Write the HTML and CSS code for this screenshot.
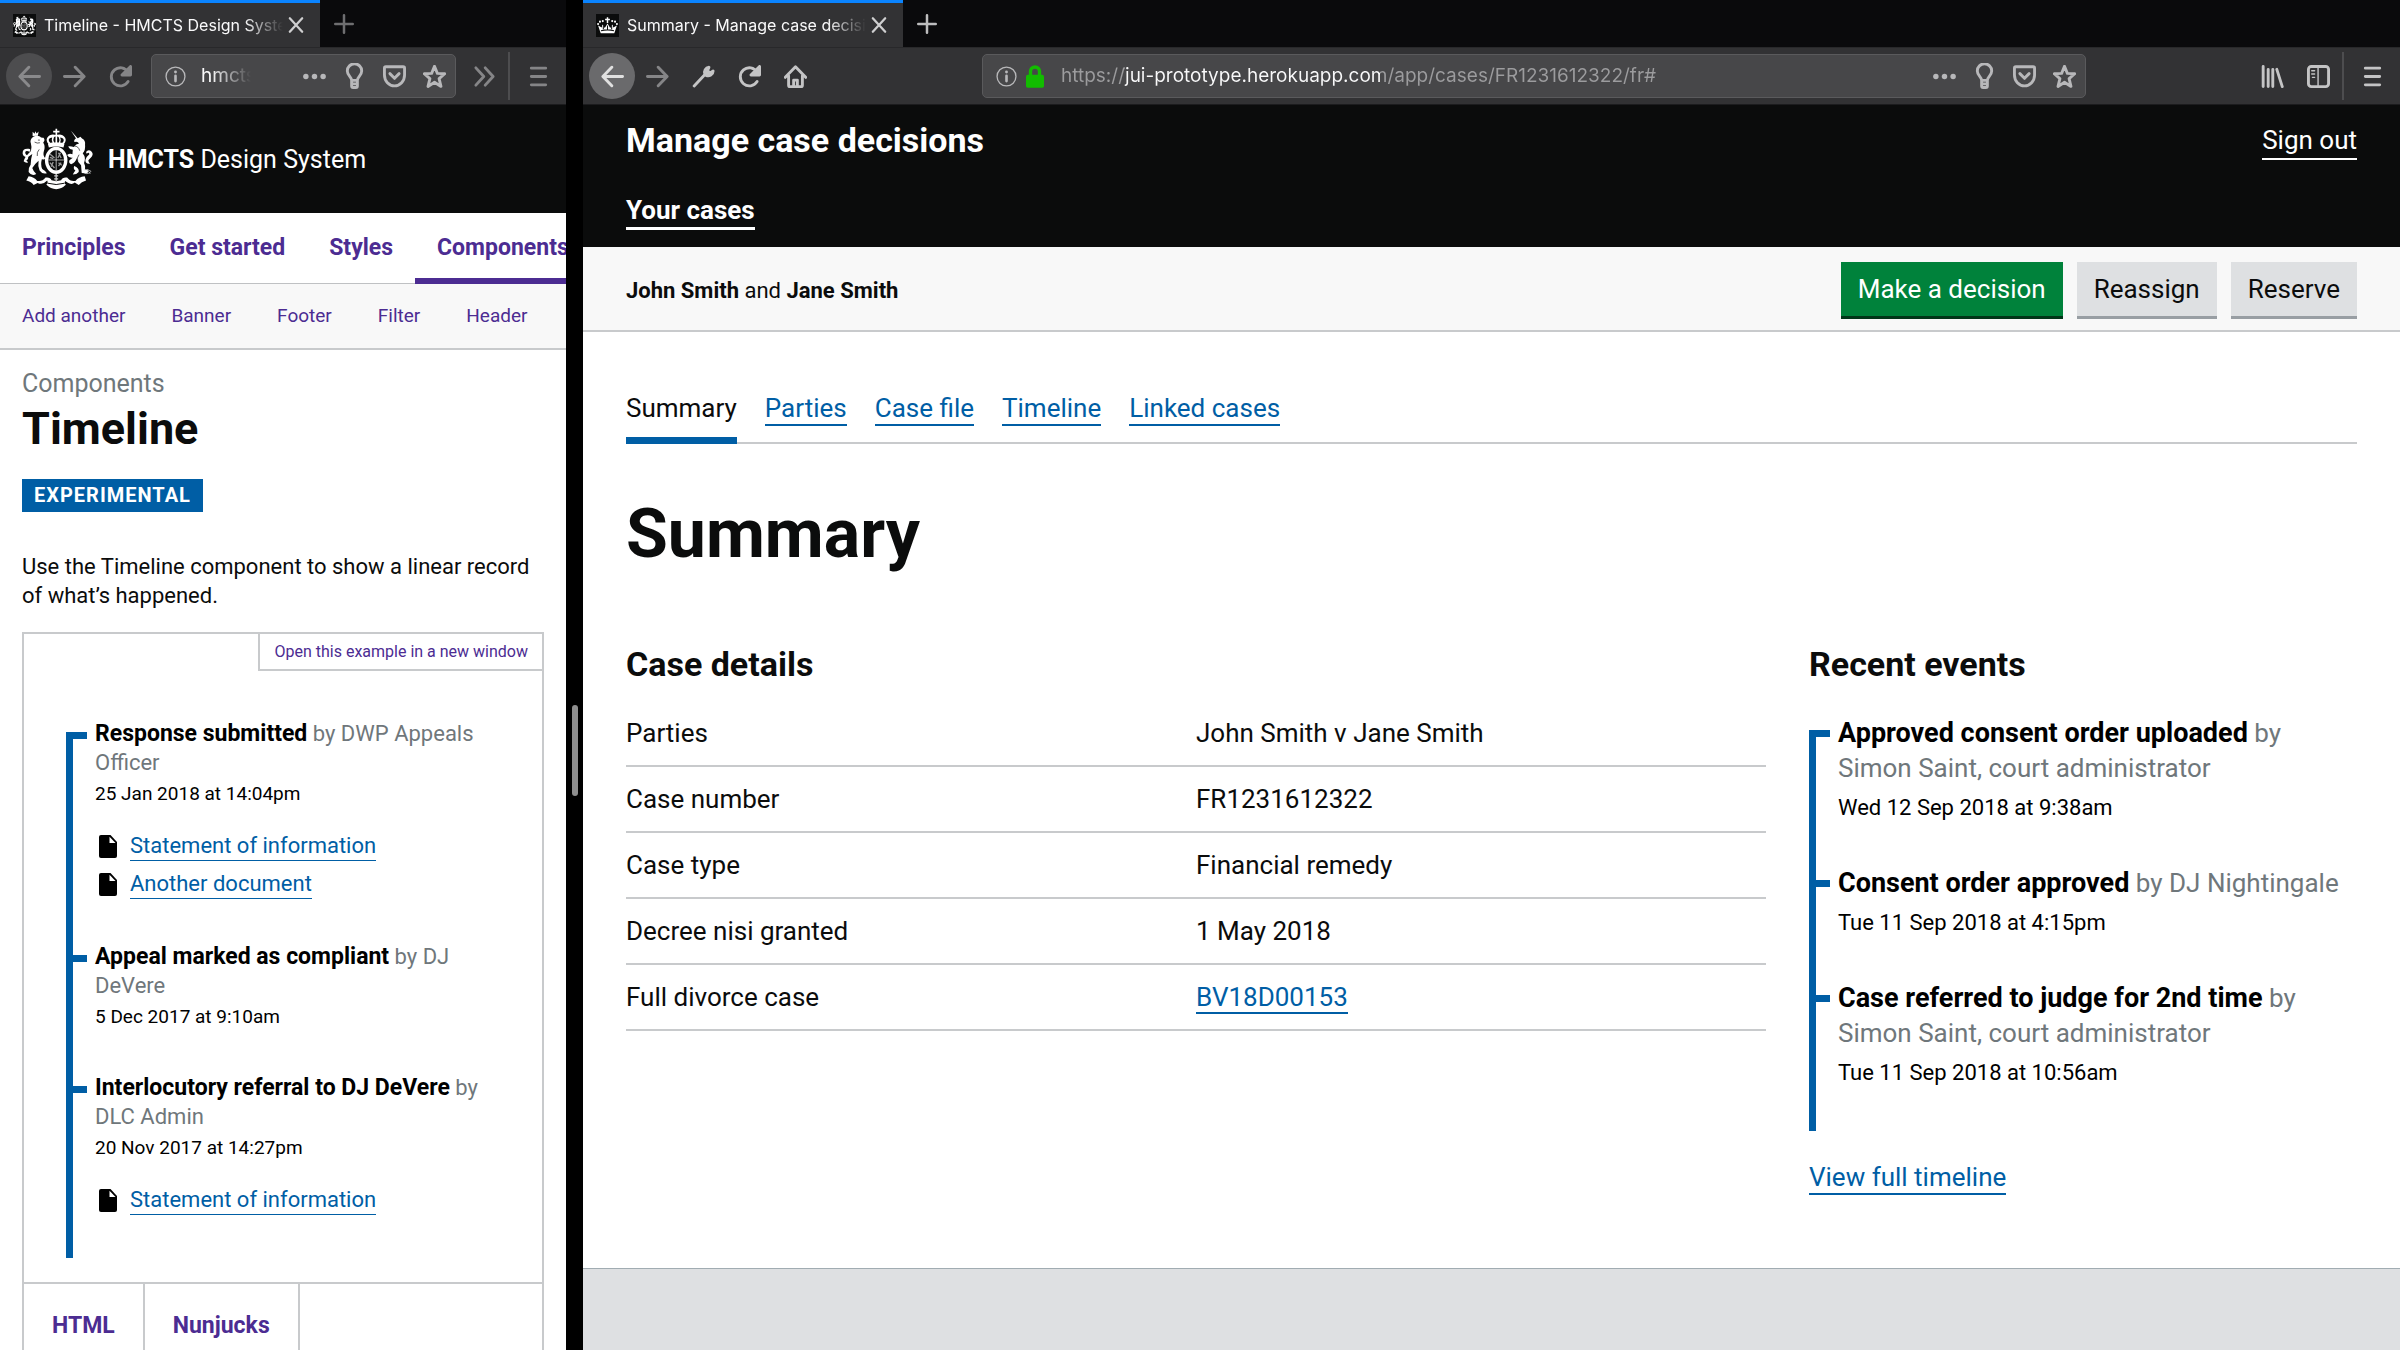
FILE: index.html
```html
<!DOCTYPE html>
<html lang="en">
<head>
<meta charset="utf-8">
<title>HMCTS Design System and Manage case decisions</title>
<link rel="stylesheet" href="styles.css">
</head>
<body>
<svg class="sprite" aria-hidden="true">
  <symbol id="i-back" viewBox="0 0 16 16"><path d="M15 8H1.500M7.500 1.500L1.300 8l6.200 6.500"/></symbol>
  <symbol id="i-forward" viewBox="0 0 16 16"><path d="M1 8h13.500M8.500 1.500L14.700 8l-6.200 6.500"/></symbol>
  <symbol id="i-reload" viewBox="0 0 16 16"><path d="M13.300 5A6.300 6.300 0 1 0 13.300 11.500"/><path d="M15 1v6H9z" class="solid"/></symbol>
  <symbol id="i-info" viewBox="0 0 16 16"><circle cx="8" cy="8" r="7.200" class="thin"/><path d="M8 7.500v4"/><circle cx="8" cy="4.600" r="1.100" class="solid dot"/></symbol>
  <symbol id="i-dots" viewBox="0 0 16 16"><g class="solid dot"><circle cx="2" cy="8" r="1.900"/><circle cx="8" cy="8" r="1.900"/><circle cx="14" cy="8" r="1.900"/></g></symbol>
  <symbol id="i-bulb" viewBox="0 0 16 18"><path d="M6 12c0-2.500-3-3.200-3-6.500a5 5 0 0 1 10 0C13 8.800 10 9.500 10 12zM6 12v4q0 1 1 1h2q1 0 1-1v-4M6 14.500h4"/></symbol>
  <symbol id="i-pocket" viewBox="0 0 16 16"><path d="M2 1.200h12q1 0 1 1V7a7 7.500 0 0 1-14 0V2.200q0-1 1-1zM4.800 6L8 9.300 11.200 6"/></symbol>
  <symbol id="i-star" viewBox="0 0 16 16"><path d="M8 .9l2 4.900 5.100.3-3.900 3.400 1.300 5.400L8 12l-4.500 2.900 1.300-5.400L.9 6.100 6 5.800z"/></symbol>
  <symbol id="i-chevrons" viewBox="0 0 16 16"><path d="M2 2l5.500 6L2 14M8.500 2L14 8l-5.500 6"/></symbol>
  <symbol id="i-menu" viewBox="0 0 16 16"><path d="M3 2.200h10M3 8h10M3 13.800h10"/></symbol>
  <symbol id="i-close" viewBox="0 0 16 16"><path d="M2.500 2l11 12M13.500 2l-11 12"/></symbol>
  <symbol id="i-plus" viewBox="0 0 16 16"><path d="M8 1v14M1 8h14"/></symbol>
  <symbol id="i-wrench" viewBox="0 0 16 16"><path d="M1.500 14.600L9 6.600"/><path d="M11.800 1.600A3.400 3.400 0 0 0 9 6.400L9.800 7.200A3.400 3.400 0 0 0 14.700 4.200L12.600 5.600 10.800 3.800z" class="solid"/></symbol>
  <symbol id="i-home" viewBox="0 0 16 16"><path d="M.9 8.600L8 1.200l7.100 7.400M3.200 7.500V14q0 1 1 1h7.600q1 0 1-1V7.500M6.700 15v-4.500h2.600V15"/></symbol>
  <symbol id="i-lock" viewBox="0 0 16 20"><path d="M4 9V5.500a4 4 0 0 1 8 0V9" fill="none" stroke="#12bc00" stroke-width="3"/><rect x="0" y="8.500" width="16" height="11.500" rx="1.500" fill="#12bc00"/></symbol>
  <symbol id="i-library" viewBox="0 0 16 16"><path d="M1.500 1v14M5 3v12M8.200 3v12M11 3l3.800 12"/></symbol>
  <symbol id="i-sidebar" viewBox="0 0 16 16"><rect x="1" y="1" width="14" height="14" rx="2"/><path d="M7.700 1v14" class="thin"/><path d="M3.300 4h2M3.300 6.300h2M3.800 8.600h1.500" class="thin"/></symbol>
  <symbol id="i-doc" viewBox="0 0 18 23"><path d="M2 0h9.500L18 7v14q0 2-2 2H2q-2 0-2-2V2Q0 0 2 0z" fill="#000"/><path d="M10.500 1.800V8h6z" fill="#fff"/></symbol>
  <symbol id="i-crest" viewBox="0 0 214 182">
    <g fill="#fff">
      <path d="M101 0h5v6h7v5h-7v8h-5v-8h-7V6h7z"/>
      <path d="M76 27q10-14 27-8 17-6 27 8 5 9-4 19H80q-9-10-4-19zm5 4q-2 6 4 11h7q-4-9-1-16-7 0-10 5zm15-5q-4 8 1 16h4V23q-3 0-5 3zm10-3v19h5q4-9 0-16-2-3-5-3zm9 3q4 8 0 16h7q6-5 3-11-3-5-10-5z"/>
      <path d="M78 45q25-7 50 0l-3 11q-22-5-44 0z"/>
      <path fill-rule="evenodd" d="M103 54a34 41 0 1 1 0 82 34 41 0 1 1 0-82zm0 10a24 31 0 1 0 0 62 24 31 0 1 0 0-62z"/>
      <path d="M32 9l6 6 2-8 4 7 6-6-2 13-16 1z"/>
      <path d="M34 24q10-6 20-1 3 5 11 4 6 8-1 14 7 12 2 26-4 13 4 22-3 6-10 2-5 18 1 30 10 5 14 13-14 4-22-8-6-14-3-30-12 10-19 22 3 10 12 18-14 8-23-6-2-12 6-22 1-19 5-32-14 8-20 19 5 0 7 7-8 2-13-4 2-12 22-31 3-14 0-22-5-12 7-21z"/>
      <path d="M20 60Q0 58 2 76q2 8 9 9 4 6-5 12 16-2 12-16-10-4-8-11 2-6 13-1 6-8-3-9z"/>
      <path d="M147 5l24 27-4 3z"/>
      <path d="M166 30l10-6 5 5q11 5 9 19 2 16-7 26 11 14 4 29 5 9 3 20l10 3-3 9-17-2-2-23q-10-9-13-21-4 14-17 18-8-3-5-12l10-8q-12 2-17-8 8-6 16-2l1-14q-11-2-14-10 9-1 17 2 7-10 16-11-5-8-14-4-3-6 6-12z"/>
      <path d="M193 70q7-10 17-1 6 7 0 15l-10 11q0 6 5 10-14 2-14-11 2-9 12-17 0-8-8-2z"/>
      <path d="M157 112q16 6 14 18-6 8-18 8 5-9 8-12-7-5-4-14z"/>
      <path d="M20 143q16 2 26 14 15 3 25-10 14-2 18 8 15 4 29 0 4-10 18-8 10 13 25 10 10-12 28-14l4 13q-14 4-22 13l-12-7q-9 9-22 0l-7-5q-4 10 3 11-14 14-30 14t-30-14q7-2 3-12-14 15-29 7l-12 6q-6-9-22-13z"/>
    </g>
    <path d="M103 64v62M79 94h48" stroke="#fff" stroke-width="2"/>
    <path d="M84 76l14 12M84 86l10 4M110 72l8 16M116 72l-8 16M84 102l14 16M94 100l-6 14M110 102l10 8M110 112l8-10" stroke="#999" stroke-width="4"/>
    <path d="M103 136v24M97 142h12M97 151h12" stroke="#ccc" stroke-width="4"/>
    <path d="M78 164q25 8 50 0" stroke="#0b0c0c" stroke-width="3" fill="none"/>
    <g stroke="#0b0c0c" stroke-width="2" fill="none"><path d="M38 40q8 5 16 2M52 62q-8 8-6 20M158 52q12 0 16 14M172 78q-8 10-4 20M48 34h6"/></g>
    <g stroke="#ddd" stroke-width="2" fill="none"><path d="M186 124q14-4 22 4-6 10-20 6M196 122l10 14"/></g>
  </symbol>
  <symbol id="i-crown" viewBox="0 0 22 22"><g fill="#fff"><path d="M10.300 3h1.400v1.500h1.600v1.400h-1.600v2.600h-1.400V5.900H8.700V4.500h1.600z"/><circle cx="2" cy="9.500" r="1"/><circle cx="3.800" cy="7.300" r="1"/><circle cx="6.500" cy="6.800" r="1"/><circle cx="20" cy="9.500" r="1"/><circle cx="18.200" cy="7.300" r="1"/><circle cx="15.500" cy="6.800" r="1"/><path d="M4.500 18.500L2 11l3.500 2 .6-3 2.300 3.500L11 9l2.600 4.500L15.900 10l.6 3L20 11l-2.500 7.500z"/></g><path d="M4.800 16q6.200-1.600 12.400 0M7 11.500v3M15 11.500v3M11 11v4" fill="none" stroke="#111" stroke-width="1"/></symbol>
</svg>

<div class="split">
  <section class="window" aria-label="HMCTS Design System">
    <div class="tabstrip">
      <div class="tab">
        <svg class="favicon"><use href="#i-crest"/></svg>
        <span class="tab-title">Timeline - HMCTS Design System</span>
        <button class="tab-button" aria-label="Close tab"><svg class="icon close"><use href="#i-close"/></svg></button>
      </div>
      <button class="new-tab dim" aria-label="New tab"><svg class="icon plus"><use href="#i-plus"/></svg></button>
    </div>
    <div class="toolbar dim">
      <button class="round" aria-label="Back"><svg class="icon"><use href="#i-back"/></svg></button>
      <button aria-label="Forward"><svg class="icon"><use href="#i-forward"/></svg></button>
      <button aria-label="Reload"><svg class="icon"><use href="#i-reload"/></svg></button>
      <div class="urlbar">
        <svg class="icon small"><use href="#i-info"/></svg>
        <input class="url url-short" aria-label="Address" value="hmcts-design-system.herokuapp.com">
        <svg class="icon"><use href="#i-dots"/></svg>
        <svg class="icon tall"><use href="#i-bulb"/></svg>
        <svg class="icon"><use href="#i-pocket"/></svg>
        <svg class="icon"><use href="#i-star"/></svg>
      </div>
      <button class="overflow" aria-label="More tools"><svg class="icon"><use href="#i-chevrons"/></svg></button>
      <button class="menu" aria-label="Menu"><svg class="icon"><use href="#i-menu"/></svg></button>
    </div>

    <div class="page">
      <header class="ds-header">
        <svg class="crest"><use href="#i-crest"/></svg>
        <a href="#" class="ds-name"><b>HMCTS</b> Design System</a>
      </header>
      <nav class="ds-nav" aria-label="Sections">
        <a href="#">Principles</a><a href="#">Get started</a><a href="#">Styles</a><a href="#" class="current">Components</a>
      </nav>
      <nav class="ds-subnav" aria-label="Components">
        <a href="#">Add another</a><a href="#">Banner</a><a href="#">Footer</a><a href="#">Filter</a><a href="#">Header</a>
      </nav>
      <main class="ds-main">
        <p class="caption">Components</p>
        <h1 class="ds-title">Timeline</h1>
        <strong class="tag">EXPERIMENTAL</strong>
        <p class="intro">Use the Timeline component to show a linear record of what’s happened.</p>
        <div class="example">
          <div class="example-open"><a href="#">Open this example in a new window</a></div>
          <ol class="timeline">
            <li>
              <p class="event"><b>Response submitted</b> by DWP Appeals Officer</p>
              <p class="date">25 Jan 2018 at 14:04pm</p>
              <ul class="documents">
                <li><svg class="doc"><use href="#i-doc"/></svg><a class="link" href="#">Statement of information</a></li>
                <li><svg class="doc"><use href="#i-doc"/></svg><a class="link" href="#">Another document</a></li>
              </ul>
            </li>
            <li>
              <p class="event"><b>Appeal marked as compliant</b> by DJ DeVere</p>
              <p class="date">5 Dec 2017 at 9:10am</p>
            </li>
            <li>
              <p class="event"><b>Interlocutory referral to DJ DeVere</b> by DLC Admin</p>
              <p class="date">20 Nov 2017 at 14:27pm</p>
              <ul class="documents">
                <li><svg class="doc"><use href="#i-doc"/></svg><a class="link" href="#">Statement of information</a></li>
              </ul>
            </li>
          </ol>
          <div class="code-tabs"><a href="#">HTML</a><a href="#">Nunjucks</a></div>
        </div>
      </main>
    </div>
  </section>

  <div class="divider"><span class="handle"></span></div>

  <section class="window" aria-label="Manage case decisions">
    <div class="tabstrip">
      <div class="tab">
        <svg class="favicon"><use href="#i-crown"/></svg>
        <span class="tab-title">Summary - Manage case decisions</span>
        <button class="tab-button" aria-label="Close tab"><svg class="icon close"><use href="#i-close"/></svg></button>
      </div>
      <button class="new-tab" aria-label="New tab"><svg class="icon plus"><use href="#i-plus"/></svg></button>
    </div>
    <div class="toolbar">
      <button class="round" aria-label="Back"><svg class="icon"><use href="#i-back"/></svg></button>
      <button class="dim" aria-label="Forward"><svg class="icon"><use href="#i-forward"/></svg></button>
      <button aria-label="Developer tools"><svg class="icon"><use href="#i-wrench"/></svg></button>
      <button aria-label="Reload"><svg class="icon"><use href="#i-reload"/></svg></button>
      <button aria-label="Home"><svg class="icon"><use href="#i-home"/></svg></button>
      <div class="urlbar wide">
        <svg class="icon small"><use href="#i-info"/></svg>
        <svg class="lock"><use href="#i-lock"/></svg>
        <input class="url url-long" aria-label="Address" value="https://jui-prototype.herokuapp.com/app/cases/FR1231612322/fr#">
        <svg class="icon"><use href="#i-dots"/></svg>
        <svg class="icon tall"><use href="#i-bulb"/></svg>
        <svg class="icon"><use href="#i-pocket"/></svg>
        <svg class="icon"><use href="#i-star"/></svg>
      </div>
      <button aria-label="Library"><svg class="icon"><use href="#i-library"/></svg></button>
      <button aria-label="Sidebars"><svg class="icon"><use href="#i-sidebar"/></svg></button>
      <button class="menu" aria-label="Menu"><svg class="icon"><use href="#i-menu"/></svg></button>
    </div>

    <div class="page footer-fill">
      <header class="app-header">
        <div class="app-top">
          <a href="#" class="app-name">Manage case decisions</a>
          <a href="#" class="sign-out">Sign out</a>
        </div>
        <nav class="app-nav" aria-label="Main"><a href="#">Your cases</a></nav>
      </header>
      <div class="case-bar">
        <p><b>John Smith</b> and <b>Jane Smith</b></p>
        <div class="actions">
          <button class="btn primary">Make a decision</button>
          <button class="btn">Reassign</button>
          <button class="btn">Reserve</button>
        </div>
      </div>
      <main class="app-main">
        <nav class="case-tabs" aria-label="Case">
          <a href="#" class="current">Summary</a>
          <a href="#" class="link">Parties</a>
          <a href="#" class="link">Case file</a>
          <a href="#" class="link">Timeline</a>
          <a href="#" class="link">Linked cases</a>
        </nav>
        <h1 class="app-title">Summary</h1>
        <div class="columns">
          <section>
            <h2>Case details</h2>
            <table class="details">
              <tr><th scope="row">Parties</th><td>John Smith v Jane Smith</td></tr>
              <tr><th scope="row">Case number</th><td>FR1231612322</td></tr>
              <tr><th scope="row">Case type</th><td>Financial remedy</td></tr>
              <tr><th scope="row">Decree nisi granted</th><td>1 May 2018</td></tr>
              <tr><th scope="row">Full divorce case</th><td><a class="link" href="#">BV18D00153</a></td></tr>
            </table>
          </section>
          <section>
            <h2>Recent events</h2>
            <ol class="timeline large">
              <li>
                <p class="event"><b>Approved consent order uploaded</b> by Simon Saint, court administrator</p>
                <p class="date">Wed 12 Sep 2018 at 9:38am</p>
              </li>
              <li>
                <p class="event"><b>Consent order approved</b> by DJ Nightingale</p>
                <p class="date">Tue 11 Sep 2018 at 4:15pm</p>
              </li>
              <li>
                <p class="event"><b>Case referred to judge for 2nd time</b> by Simon Saint, court administrator</p>
                <p class="date">Tue 11 Sep 2018 at 10:56am</p>
              </li>
            </ol>
            <a class="link view-all" href="#">View full timeline</a>
          </section>
        </div>
      </main>
    </div>
  </section>
</div>
</body>
</html>
```
FILE: styles.css
```css
* { box-sizing: border-box; }
body { margin: 0; background: #000; color: #0b0c0c; font-family: Roboto, "Liberation Sans", sans-serif; font-size: 22px; line-height: 29px; }
p, h1, h2, ol, ul { margin: 0; padding: 0; }
ol, ul { list-style: none; }
a { color: inherit; text-decoration: none; }
button { border: 0; padding: 0; background: none; font: inherit; color: inherit; }
.sprite { display: none; }

.split { display: grid; grid-template-columns: minmax(0, 566fr) 17px minmax(0, 1817fr); height: 100vh; }
.window { display: flex; flex-direction: column; overflow: hidden; min-width: 0; }
.divider { display: flex; align-items: center; justify-content: center; padding-top: 150px; }
.handle { width: 6px; height: 91px; border-radius: 3px; background: #8e8e8e; }

/* Browser chrome */
.icon { display: block; width: 23px; height: 23px; fill: none; stroke: currentColor; stroke-width: 2; stroke-linecap: round; stroke-linejoin: round; flex: none; }
.icon.small { width: 21px; height: 21px; }
.icon.tall { height: 26px; }
.icon.close { width: 18px; height: 18px; stroke-width: 2; }
.icon.plus { width: 20px; height: 20px; stroke-width: 2; }
.solid { fill: currentColor; }
.dot { stroke: none; }
.thin { stroke-width: 1; }
.tabstrip { display: flex; align-items: stretch; height: 47px; flex: none; background: #0a0a0c; font: 16px/24px Inter, sans-serif; color: #f9f9fa; }
.tab { display: flex; align-items: center; width: 320px; border-top: 3px solid #0a84ff; background: #323234; padding: 0 15px 0 13px; }
.favicon { width: 23px; height: 23px; flex: none; background: #0b0c0c; margin-right: 8px; }
.tab-title { flex: 1; min-width: 0; overflow: hidden; white-space: nowrap; -webkit-mask-image: linear-gradient(to right, #000 84%, transparent); mask-image: linear-gradient(to right, #000 84%, transparent); }
.tab-button { margin-left: 4px; color: #cfcfd0; }
.new-tab { padding: 0 14px; color: #bdbdbe; }
.new-tab.dim { color: #6e6e70; }
.toolbar { display: flex; align-items: center; gap: 23px; height: 58px; flex: none; padding: 0 16px 0 6px; background: #323234; border-top: 1px solid #28282a; border-bottom: 1px solid #1c1c1e; color: #c4c4c5; font: 19px/24px Inter, sans-serif; }
.toolbar.dim, .toolbar .dim { color: #858587; }
.round { display: grid; place-items: center; width: 46px; height: 46px; border-radius: 50%; background: #6a6a6c; flex: none; color: #e0e0e0; margin-right: -12px; }
.dim .round { background: #4d4d4f; color: #8a8a8c; }
.urlbar { display: flex; align-items: center; flex: 1; min-width: 0; gap: 17px; height: 44px; padding: 0 9px 0 13px; border: 1px solid #5a5a5c; border-radius: 5px; background: #474749; color: #b8b8ba; margin-left: -4px; }
.urlbar.wide { margin: 0 152px; }
.url { flex: 1; min-width: 0; padding: 0; border: 0; outline: 0; background: none; font: inherit; color: #f9f9fa; }
.url-short { margin: 0 35px 0 -2px; -webkit-mask-image: linear-gradient(to right, #000 20%, transparent); mask-image: linear-gradient(to right, #000 20%, transparent); }
.lock { width: 18px; height: 23px; flex: none; margin-left: -8px; }
.url-long { color: transparent; background: linear-gradient(to right, #9c9c9e 63px, #f9f9fa 63px 319px, #9c9c9e 319px); -webkit-background-clip: text; background-clip: text; }
.overflow { margin-left: -6px; }
.menu { align-self: stretch; margin: 4px 0 4px -11px; padding-left: 17px; border-left: 2px solid #4d4d4f; }

.page { flex: 1; min-height: 0; overflow: hidden; background: #fff; }
.footer-fill { background: #dee0e2; }

/* Design system site */
.ds-header { display: flex; align-items: center; gap: 15px; height: 108px; padding: 0 22px; background: #0b0c0c; color: #fff; font-size: 25px; }
.crest { width: 71px; height: 62px; }
.ds-nav { display: flex; padding-left: 22px; border-bottom: 1px solid #bfc1c3; color: #4c2c92; font-size: 23px; font-weight: 700; line-height: 69px; white-space: nowrap; }
.ds-nav a { margin-right: 44px; }
.ds-nav .current { margin: 0 0 -1px -22px; padding: 0 22px; height: 71px; border-bottom: 6px solid #4c2c92; }
.ds-subnav { display: flex; gap: 46px; padding: 0 22px; background: #f8f8f8; border-bottom: 2px solid #c8cacc; color: #4c2c92; font-size: 19px; line-height: 64px; white-space: nowrap; }
.ds-main { padding: 18px 22px 0; }
.caption { color: #6f777b; font-size: 25px; line-height: 32px; }
.ds-title { margin-top: 5px; font-size: 45px; line-height: 48px; }
.tag { display: inline-block; margin-top: 26px; padding: 0 12px; background: #005ea5; color: #fff; font-size: 20px; line-height: 33px; letter-spacing: 1px; }
.intro { margin: 40px 0 22px; }
.example { border: 2px solid #c8cacc; }
.example-open { display: flex; justify-content: flex-end; }
.example-open a { padding: 0 14px; border: 2px solid #c8cacc; border-width: 0 0 2px 2px; color: #4c2c92; font-size: 16px; line-height: 35px; }

/* Timeline, shared by both sites */
.timeline { position: relative; margin: 48px 42px 24px; padding-left: 29px; color: #000; }
.timeline::before { content: ""; position: absolute; left: 0; top: 13px; bottom: 0; width: 7px; background: #005ea5; }
.timeline > li { position: relative; padding-bottom: 44px; }
.timeline > li::before { content: ""; position: absolute; left: -29px; top: 13px; width: 21px; height: 7px; background: #005ea5; }
.event { color: #6f777b; }
.event b { color: #000; font-size: 23px; }
.date { margin-top: 5px; font-size: 19px; line-height: 24px; }
.documents { display: grid; gap: 10px; margin-top: 26px; }
.documents li { display: flex; align-items: center; gap: 13px; padding-left: 4px; height: 28px; }
.doc { width: 18px; height: 23px; }
.link { color: #005ea5; border-bottom: 2px solid currentColor; }
.documents .link { border-width: 1px; line-height: 28px; }
.code-tabs { display: flex; border-top: 2px solid #c8cacc; color: #4c2c92; font-size: 23px; font-weight: 700; line-height: 84px; }
.code-tabs a { padding: 0 28px; border-right: 2px solid #c8cacc; }

/* Case management site */
.app-header { padding: 15px 43px 17px; background: #0b0c0c; color: #fff; }
.app-top { display: flex; justify-content: space-between; }
.app-name { font-size: 34px; line-height: 40px; font-weight: 700; }
.sign-out { font-size: 26px; line-height: 36px; margin-top: 2px; border-bottom: 2px solid; }
.app-nav { display: flex; margin-top: 34px; font-size: 26px; line-height: 33px; font-weight: 700; }
.app-nav a { border-bottom: 3px solid; }
.case-bar { display: flex; justify-content: space-between; align-items: center; padding: 15px 43px 11px; background: #f8f8f8; border-bottom: 2px solid #c8cacc; }
.actions { display: flex; gap: 14px; }
.btn { padding: 0 17px; height: 54px; margin-bottom: 3px; background: #dee0e2; box-shadow: 0 3px 0 #989ea3; font-size: 26px; color: #0b0c0c; }
.btn.primary { background: #00823b; box-shadow: 0 3px 0 #003618; color: #fff; }
.app-main { padding: 60px 43px 73px; background: #fff; border-bottom: 1px solid #a1acb2; font-size: 26px; line-height: 32px; }
.case-tabs { display: flex; align-items: flex-start; gap: 28px; border-bottom: 2px solid #c8cacc; }
.case-tabs .current { padding-bottom: 13px; margin-bottom: -2px; border-bottom: 7px solid #005ea5; }
.app-title { margin-top: 52px; font-size: 68px; line-height: 76px; }
.columns { display: grid; grid-template-columns: calc(200% / 3 - 14px) minmax(0, 1fr); gap: 43px; margin-top: 72px; }
h2 { font-size: 34px; line-height: 40px; }
.details { width: 100%; margin-top: 16px; border-collapse: collapse; }
.details th, .details td { width: 50%; height: 66px; padding: 0; border-bottom: 2px solid #c8cacc; text-align: left; font-weight: 400; }
.timeline.large { margin: 32px 0 30px; line-height: 35px; }
.timeline.large::before, .timeline.large > li::before { top: 14px; }
.large b { font-size: 27px; }
.large .date { margin-top: 8px; font-size: 22px; line-height: 28px; }
.view-all { display: inline-block; }
```
